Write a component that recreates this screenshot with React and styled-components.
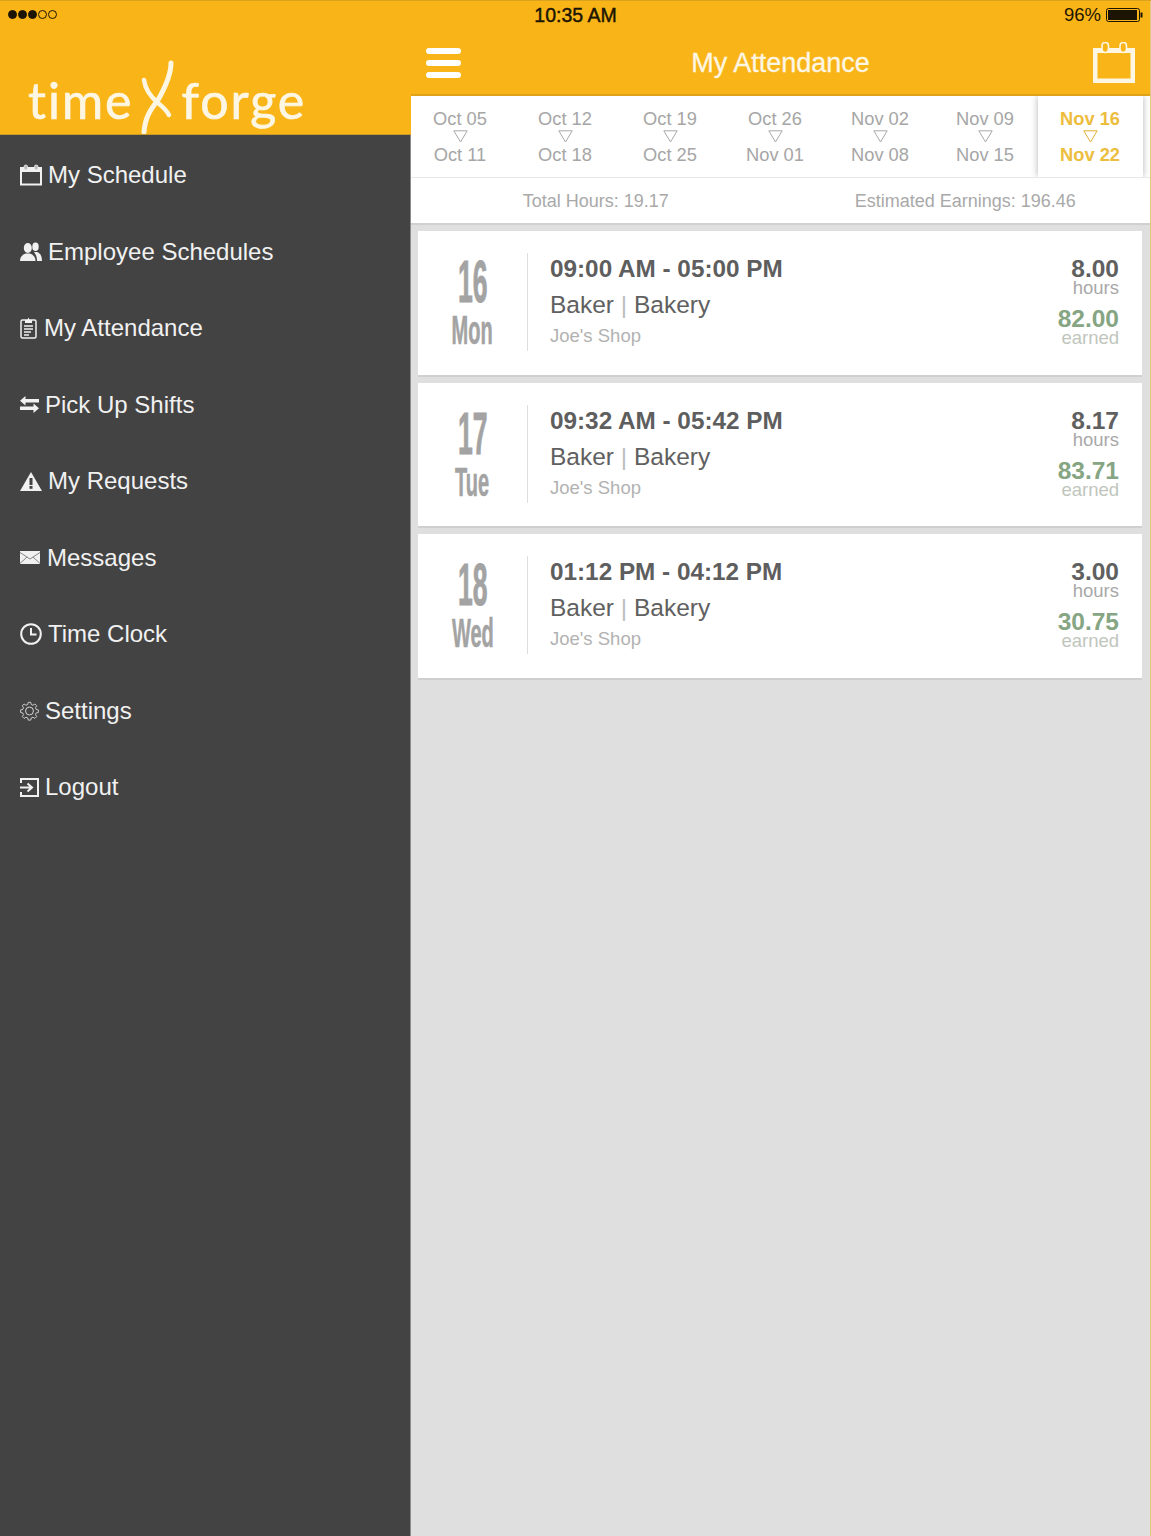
import React from 'react';
import styled, { createGlobalStyle } from 'styled-components';

const Global = createGlobalStyle`
  html, body { margin: 0; padding: 0; background: #dfdfdf; }
  * { box-sizing: border-box; }
  body { font-family: "Liberation Sans", Arial, sans-serif; }
`;

const Screen = styled.div`
  position: relative;
  width: 1151px;
  height: 1536px;
  display: flex;
  overflow: hidden;
`;

const StatusBar = styled.div`
  position: absolute;
  top: 0; left: 0; right: 0;
  height: 31px;
  border-top: 1px solid #d9a21f;
  padding: 0 8px;
  display: grid;
  grid-template-columns: 1fr auto 1fr;
  align-items: center;
  color: #1c1404;
  font-size: 18.5px;
  line-height: 30px;
`;
const Signal = styled.div`
  display: flex;
  gap: 1px;
  margin-top: -3px;
`;
const Dot = styled.span`
  width: 9px; height: 9px;
  border-radius: 50%;
  border: 1px solid #1c1404;
  background: ${p => (p.$on ? '#1c1404' : 'transparent')};
`;
const Clock = styled.div`
  font-size: 19.5px;
  -webkit-text-stroke: 0.45px #1c1404;
  margin-top: -2px;
`;
const Battery = styled.div`
  display: flex;
  align-items: center;
  justify-content: flex-end;
  gap: 5px;
  margin-top: -2px;
`;

const Sidebar = styled.aside`
  width: 411px;
  flex: none;
  display: flex;
  flex-direction: column;
`;
const Brand = styled.div`
  height: 135px;
  background: #f9b517;
  display: flex;
  align-items: flex-end;
  padding: 0 0 0 28px;
  border-bottom: 1px solid #c79a2a;
  color: #fdf6e3;
`;
const BrandWord = styled.span`
  font-family: Lato, "Open Sans", sans-serif;
  font-size: 50px;
  font-weight: 400;
  line-height: 56px;
  letter-spacing: ${p => p.$sp}px;
  -webkit-text-stroke: 0.7px #fdf6e3;
  margin-bottom: 6px;
  display: block;
`;
const BrandMark = styled.svg`
  width: 44px;
  height: 74px;
  flex: none;
  margin: 0 2px;
  display: block;
`;
const Nav = styled.nav`
  flex: 1;
  background: #434343;
  border-right: 1px solid #8b8b8b;
  padding-top: 2px;
`;
const NavItem = styled.div`
  height: 76.5px;
  padding-left: 20px;
  display: flex;
  align-items: center;
  color: #f1f1f1;
  font-size: 24px;
`;
const NavIcon = styled.svg`
  flex: none;
  display: block;
  margin-right: ${p => p.$gap}px;
`;

const Main = styled.main`
  flex: 1;
  display: flex;
  flex-direction: column;
  min-width: 0;
  border-right: 1px solid #e2c77f;
`;
const Header = styled.header`
  height: 96px;
  background: #f9b517;
  border-bottom: 2px solid #dfa219;
  padding: 32px 15px 0 15px;
  display: grid;
  grid-template-columns: 60px 1fr 60px;
  align-items: center;
`;
const Menu = styled.div`
  display: flex;
  flex-direction: column;
  gap: 6px;
  width: 35px;
`;
const MenuBar = styled.span`
  height: 6px;
  border-radius: 3px;
  background: #fff;
`;
const Title = styled.h1`
  margin: 1px 0 0;
  text-align: center;
  color: #fdf6e3;
  font-size: 27px;
  font-weight: 400;
  -webkit-text-stroke: 0.3px #fdf6e3;
`;
const CalendarIcon = styled.svg`
  display: block;
  justify-self: end;
  margin-top: -2px;
`;
const Tabs = styled.div`
  height: 82px;
  background: #fff;
  display: flex;
  justify-content: flex-end;
  padding-right: 7.5px;
  overflow: hidden;
  border-bottom: 1px solid #e8e8e8;
`;
const Tab = styled.div`
  flex: 0 0 105px;
  display: flex;
  flex-direction: column;
  align-items: center;
  padding-top: 12px;
  color: ${p => (p.$active ? '#edbd3e' : '#a6a6a6')};
  font-size: 18.3px;
  line-height: 22px;
  font-weight: ${p => (p.$active ? 700 : 400)};
  box-shadow: ${p => (p.$active ? '0 0 7px rgba(0,0,0,.3)' : 'none')};
  background: #fff;
  position: relative;
  z-index: ${p => (p.$active ? 1 : 0)};
`;
const Arrow = styled.svg`
  display: block;
  margin: 0 0 1px;
`;
const Summary = styled.div`
  height: 47px;
  background: #fff;
  border-bottom: 2px solid #d0d0d0;
  padding-top: 2px;
  display: grid;
  grid-template-columns: 1fr 1fr;
  align-items: center;
  text-align: center;
  color: #a9a9a9;
  font-size: 18px;
`;
const List = styled.div`
  flex: 1;
  background: #dfdfdf;
  padding: 6px 8px 0 7px;
  display: flex;
  flex-direction: column;
  gap: 6px;
  align-items: stretch;
`;
const Card = styled.article`
  height: 145.5px;
  background: #fff;
  border-bottom: 2px solid #cfcfcf;
  display: flex;
  align-items: center;
  padding: 0 23px 0 0;
`;
const DateCol = styled.div`
  width: 110px;
  height: 98px;
  flex: none;
  border-right: 1px solid #dedede;
  display: flex;
  flex-direction: column;
  align-items: center;
  color: #a3a3a3;
  font-weight: 700;
  padding-top: 3px;
  margin-top: -1px;
`;
const DayNum = styled.div`
  font-size: 59px;
  line-height: 52px;
  transform: scaleX(0.45);
  -webkit-text-stroke: 1px #a3a3a3;
  white-space: nowrap;
`;
const DayName = styled.div`
  font-size: 40px;
  line-height: 38px;
  margin-top: 3px;
  transform: scaleX(0.5);
  -webkit-text-stroke: 0.6px #a3a3a3;
  white-space: nowrap;
`;
const Info = styled.div`
  flex: 1;
  padding-left: 22px;
  margin-top: -5px;
`;
const Times = styled.div`
  color: #5e5e5e;
  font-size: 24.3px;
  font-weight: 700;
  line-height: 36px;
`;
const Role = styled.div`
  color: #606060;
  font-size: 24.5px;
  line-height: 36px;
`;
const Sep = styled.span`
  color: #bdbdbd;
`;
const Shop = styled.div`
  color: #b2b2b2;
  font-size: 18.5px;
  line-height: 26px;
`;
const Figures = styled.div`
  text-align: right;
  margin-top: 1px;
`;
const Amount = styled.div`
  color: ${p => (p.$green ? '#86a583' : '#606060')};
  font-size: 24.5px;
  font-weight: 700;
  line-height: 20px;
  margin-top: ${p => (p.$green ? 12 : 0)}px;
`;
const Unit = styled.div`
  color: ${p => (p.$green ? '#bfc6bd' : '#a8a8a8')};
  font-size: 18.5px;
  line-height: 18px;
`;

const IconStroke = { fill: 'none', stroke: '#f1f1f1', strokeWidth: 2 };

const icons = {
  schedule: (
    <NavIcon $gap={6} width="22" height="22" viewBox="0 0 22 22">
      <rect x="1" y="4" width="20" height="16.500" {...IconStroke} />
      <rect x="1" y="3" width="20" height="5" fill="#f1f1f1" />
      <rect x="4" y="1" width="3.600" height="5" rx="1.800" fill="#bdbdbd" stroke="#f1f1f1" strokeWidth=".8" />
      <rect x="14.400" y="1" width="3.600" height="5" rx="1.800" fill="#bdbdbd" stroke="#f1f1f1" strokeWidth=".8" />
    </NavIcon>
  ),
  people: (
    <NavIcon $gap={6} width="22" height="20" viewBox="0 0 22 20">
      <ellipse cx="7.800" cy="6" rx="4" ry="5" fill="#f1f1f1" />
      <path d="M0 19c0-4 2-6 5.500-7.500h4.600C13.500 13 15.500 15 15.500 19z" fill="#f1f1f1" />
      <ellipse cx="15.500" cy="4.800" rx="3.200" ry="4.300" fill="#f1f1f1" />
      <path d="M14 10h3c3 1 5 3.500 5 9h-5c0-3.500-1-6.500-3-9z" fill="#f1f1f1" />
    </NavIcon>
  ),
  attendance: (
    <NavIcon $gap={7} width="17" height="22" viewBox="0 0 17 22">
      <rect x="1" y="3" width="15" height="18" rx="1.500" {...IconStroke} strokeWidth="1.500" />
      <path d="M5 6V3h2.300L8.500.5 9.700 3H12v3z" fill="#f1f1f1" />
      <path d="M4 9h9M4 12h9M4 15h7M4 18h5" stroke="#f1f1f1" strokeWidth="1.300" />
    </NavIcon>
  ),
  swap: (
    <NavIcon $gap={6} width="19" height="17" viewBox="0 0 19 17">
      <path d="M5.500 0v3H19v3.500H5.500v3L0 4.800z" fill="#f1f1f1" />
      <path d="M13.500 7.500v3H0V14h13.500v3l5.500-4.700z" fill="#f1f1f1" />
    </NavIcon>
  ),
  alert: (
    <NavIcon $gap={6} width="22" height="19" viewBox="0 0 22 19">
      <path d="M11 0 22 19H0z" fill="#f1f1f1" />
      <rect x="9.500" y="6" width="3" height="7" fill="#434343" />
      <rect x="9.500" y="14" width="3" height="2.800" fill="#434343" />
    </NavIcon>
  ),
  mail: (
    <NavIcon $gap={7} width="20" height="13" viewBox="0 0 20 13">
      <rect width="20" height="13" fill="#f1f1f1" />
      <path d="M0 1.500 10 8l10-6.500M0 12.500 7 6M20 12.500 13 6" fill="none" stroke="#6a6a6a" strokeWidth=".8" />
    </NavIcon>
  ),
  clock: (
    <NavIcon $gap={6} width="22" height="22" viewBox="0 0 22 22">
      <circle cx="11" cy="11" r="9.800" {...IconStroke} />
      <path d="M11 5v6.500h5.500" {...IconStroke} />
    </NavIcon>
  ),
  gear: (
    <NavIcon $gap={6} width="19" height="20" viewBox="0 0 24 24">
      <circle cx="12" cy="12" r="5" fill="none" stroke="#dcdcdc" strokeWidth="1.200" />
      <path
        d="M10.200 1.500h3.600l.6 3 2.400 1 2.600-1.700 2.500 2.500-1.700 2.600 1 2.400 3 .6v3.600l-3 .6-1 2.400 1.700 2.600-2.500 2.500-2.600-1.700-2.400 1-.6 3h-3.600l-.6-3-2.400-1-2.600 1.700-2.500-2.500 1.700-2.600-1-2.400-3-.6v-3.600l3-.6 1-2.400-1.700-2.600 2.500-2.500 2.600 1.700 2.400-1z"
        fill="none"
        stroke="#dcdcdc"
        strokeWidth="1.200"
        transform="translate(12 12) scale(.92) translate(-12 -13.400)"
      />
    </NavIcon>
  ),
  logout: (
    <NavIcon $gap={6} width="19" height="19" viewBox="0 0 19 19">
      <path d="M1 5V1h17v17H1v-4" {...IconStroke} />
      <path d="M0 9.500h11M7.500 5.500l4.500 4-4.500 4" {...IconStroke} />
    </NavIcon>
  ),
};

const navItems = [
  ['schedule', 'My Schedule'],
  ['people', 'Employee Schedules'],
  ['attendance', 'My Attendance'],
  ['swap', 'Pick Up Shifts'],
  ['alert', 'My Requests'],
  ['mail', 'Messages'],
  ['clock', 'Time Clock'],
  ['gear', 'Settings'],
  ['logout', 'Logout'],
];

const weeks = [
  ['Oct 05', 'Oct 11'],
  ['Oct 12', 'Oct 18'],
  ['Oct 19', 'Oct 25'],
  ['Oct 26', 'Nov 01'],
  ['Nov 02', 'Nov 08'],
  ['Nov 09', 'Nov 15'],
  ['Nov 16', 'Nov 22'],
];

const shifts = [
  { day: '16', name: 'Mon', time: '09:00 AM - 05:00 PM', hours: '8.00', earned: '82.00' },
  { day: '17', name: 'Tue', time: '09:32 AM - 05:42 PM', hours: '8.17', earned: '83.71' },
  { day: '18', name: 'Wed', time: '01:12 PM - 04:12 PM', hours: '3.00', earned: '30.75' },
];

export default function App() {
  return (
    <Screen>
      <Global />
      <Sidebar>
        <Brand>
          <BrandWord $sp={2}>time</BrandWord>
          <BrandMark viewBox="0 0 44 74">
            <path d="M36 3C36 14 31 26 23 40 15 50 10 58 9 72" fill="none" stroke="#fdf6e3" strokeWidth="5" strokeLinecap="round" />
            <path d="M9 20C10 28 15 36 23 43 28 47 32 51 34 55" fill="none" stroke="#fdf6e3" strokeWidth="4.500" strokeLinecap="round" />
          </BrandMark>
          <BrandWord $sp={2}>forge</BrandWord>
        </Brand>
        <Nav>
          {navItems.map(([icon, label]) => (
            <NavItem key={label}>
              {icons[icon]}
              {label}
            </NavItem>
          ))}
        </Nav>
      </Sidebar>
      <Main>
        <Header>
          <Menu>
            <MenuBar />
            <MenuBar />
            <MenuBar />
          </Menu>
          <Title>My Attendance</Title>
          <CalendarIcon width="42" height="41" viewBox="0 0 42 41">
            <path d="M0 6h42v35H0z" fill="#fdf6e3" />
            <rect x="4.500" y="11" width="33" height="25.500" fill="#f9b517" />
            <rect x="9" y="0.500" width="6.500" height="10" rx="3.200" fill="#f9b517" stroke="#fdf6e3" strokeWidth="1.600" />
            <rect x="27" y="0.500" width="6.500" height="10" rx="3.200" fill="#f9b517" stroke="#fdf6e3" strokeWidth="1.600" />
          </CalendarIcon>
        </Header>
        <Tabs>
          {weeks.map(([from, to], i) => {
            const active = i === weeks.length - 1;
            return (
              <Tab key={from} $active={active}>
                <span>{from}</span>
                <Arrow width="15" height="13" viewBox="0 0 15 13">
                  <path d="M.8.800h13.400L7.500 12z" fill="none" stroke={active ? '#e0b033' : '#a8a8a8'} strokeWidth="1" />
                </Arrow>
                <span>{to}</span>
              </Tab>
            );
          })}
        </Tabs>
        <Summary>
          <span>Total Hours: 19.17</span>
          <span>Estimated Earnings: 196.46</span>
        </Summary>
        <List>
          {shifts.map(s => (
            <Card key={s.day}>
              <DateCol>
                <DayNum>{s.day}</DayNum>
                <DayName>{s.name}</DayName>
              </DateCol>
              <Info>
                <Times>{s.time}</Times>
                <Role>Baker <Sep>|</Sep> Bakery</Role>
                <Shop>Joe's Shop</Shop>
              </Info>
              <Figures>
                <Amount>{s.hours}</Amount>
                <Unit>hours</Unit>
                <Amount $green>{s.earned}</Amount>
                <Unit $green>earned</Unit>
              </Figures>
            </Card>
          ))}
        </List>
      </Main>
      <StatusBar>
        <Signal>
          <Dot $on /><Dot $on /><Dot $on /><Dot /><Dot />
        </Signal>
        <Clock>10:35 AM</Clock>
        <Battery>
          96%
          <svg width="37" height="14" viewBox="0 0 37 14">
            <rect x=".5" y=".5" width="33" height="13" rx="2" fill="none" stroke="#1c1404" />
            <rect x="2" y="2" width="29" height="10" fill="#1c1404" />
            <rect x="34.500" y="4.500" width="2" height="5" fill="#1c1404" />
          </svg>
        </Battery>
      </StatusBar>
    </Screen>
  );
}
